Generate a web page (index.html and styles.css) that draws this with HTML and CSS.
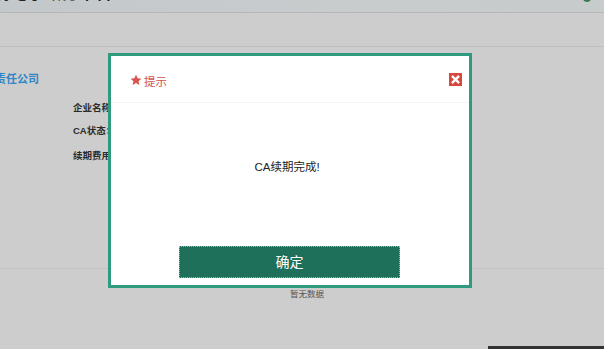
FILE: index.html
```html
<!DOCTYPE html>
<html lang="zh">
<head>
<meta charset="utf-8">
<title>CA续期</title>
<link rel="stylesheet" href="styles.css">
</head>
<body>
<div class="page">
  <header class="topbar">
    <div class="brand">局电子政务平台</div>
    <div class="user">欢迎您，某某科技有限责任公司 退出系统</div>
    <span class="dot"></span>
  </header>
  <div class="tabs"></div>
  <section class="info">
    <h2 class="company">有限责任公司</h2>
    <div class="fields">
      <div class="field">企业名称：</div>
      <div class="field">CA状态：</div>
      <div class="field f3">续期费用：</div>
    </div>
  </section>
  <div class="empty">暂无数据</div>
</div>
<div class="dockbar"></div>

<div class="modal">
  <div class="modal-head">
    <svg class="star" viewBox="0 0 24 24" width="12" height="12"><path d="M12 1.5l3.2 7 7.6.8-5.7 5.1 1.6 7.5L12 18l-6.7 3.9 1.6-7.5L1.2 9.3l7.6-.8z" fill="#d9534f"/></svg>
    <span class="title">提示</span>
    <span class="close"><svg viewBox="0 0 13 13" width="13" height="13"><path d="M3.8 3.8l5.4 5.4M9.2 3.8l-5.4 5.4" stroke="#fff" stroke-width="2.4" stroke-linecap="square"/></svg></span>
  </div>
  <div class="msg">CA续期完成!</div>
  <button class="ok">确定</button>
</div>
</body>
</html>
```
FILE: styles.css
```css
* { box-sizing: border-box; }
html, body { margin: 0; padding: 0; }
body {
  width: 604px;
  height: 349px;
  overflow: hidden;
  background: #cdcdcd;
  font-family: "Liberation Sans", "Noto Sans CJK SC", sans-serif;
}
.page { display: flex; flex-direction: column; }
.topbar {
  height: 13px;
  background: linear-gradient(90deg, #c3c8cb, #c9cccd 60%, #c8cbcc);
  border-bottom: 1px solid #b4b6b7;
  display: flex;
  align-items: flex-end;
  overflow: hidden;
  position: relative;
}
.brand {
  font-size: 16px;
  font-weight: bold;
  color: #222;
  line-height: 16px;
  margin-bottom: 10px;
  margin-left: -6px;
  letter-spacing: 1px;
}
.user {
  font-size: 10px;
  color: #555;
  line-height: 10px;
  margin-bottom: 11px;
  margin-left: auto;
  margin-right: 27px;
}
.dot {
  width: 8px; height: 8px; border-radius: 50%;
  background: #3a7a55;
  margin-bottom: 10px;
  margin-right: 13px;
}
.tabs {
  height: 34px;
  border-bottom: 1px solid #c0c0c0;
}
.info {
  height: 222px;
  border-bottom: 1px solid #c2c2c2;
  padding-top: 25px;
}
.company {
  margin: 0 0 0 -27px;
  font-size: 11px;
  line-height: 14px;
  font-weight: bold;
  color: #2d86c6;
}
.fields { padding-left: 73px; margin-top: 16px; }
.field {
  font-size: 9.5px;
  font-weight: bold;
  color: #2b2b2b;
  line-height: 12px;
  height: 23px;
}
.field.f3 { margin-top: 2px; }
.empty {
  text-align: center;
  font-size: 8.5px;
  color: #555;
  margin-top: 18px;
  padding-left: 10px;
}
.dockbar {
  position: fixed;
  right: 0;
  bottom: 0;
  width: 116px;
  height: 3px;
  background: #333;
}
.modal {
  position: absolute;
  left: 108px;
  top: 53px;
  width: 364px;
  height: 235px;
  border: 3px solid #2f9a7e;
  background: #fff;
  display: flex;
  flex-direction: column;
}
.modal-head {
  height: 47px;
  border-bottom: 1px solid #f3f3f3;
  display: flex;
  align-items: center;
  padding: 3px 7px 0 19px;
}
.star { margin-right: 2px; margin-top: -1px; }
.title { font-size: 11.5px; color: #d0524e; }
.close {
  margin-left: auto;
  width: 13px; height: 13px;
  background: #d8463e;
  display: flex;
  margin-top: -2px;
}
.msg {
  margin-top: 54px;
  text-align: center;
  font-size: 11.5px;
  line-height: 20px;
  color: #222;
  padding-right: 6px;
}
.ok {
  margin: auto 0 7px 68px;
  width: 221px;
  height: 32px;
  background: #1f705b;
  border: 1px dotted #9fb9b0;
  color: #fff;
  font-family: "Noto Sans CJK SC", sans-serif;
  font-size: 14px;
  padding: 0 0 2px 0;
}
```
